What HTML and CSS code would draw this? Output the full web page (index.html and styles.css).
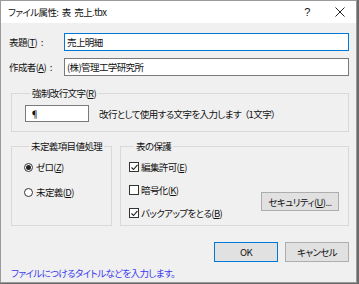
FILE: index.html
```html
<!DOCTYPE html>
<html lang="ja">
<head>
<meta charset="utf-8">
<link rel="stylesheet" href="styles.css">
</head>
<body>
<div class="dialog">
  <div class="titlebar">
    <span class="title">ファイル属性: 表 売上.tbx</span>
    <span class="help">?</span>
    <span class="close"><svg width="10" height="10" viewBox="0 0 10 10"><path d="M0.5 0.5L9.5 9.5M9.5 0.5L0.5 9.5" stroke="#222" stroke-width="1" fill="none"/></svg></span>
  </div>
  <div class="content">
    <div class="field">
      <span class="flabel">表題(<u>T</u>) :</span>
      <div class="input focused">売上明細</div>
    </div>
    <div class="field second">
      <span class="flabel">作成者(<u>A</u>) :</span>
      <div class="input">(株)管理工学研究所</div>
    </div>
    <fieldset class="group group-r">
      <legend>強制改行文字(<u>R</u>)</legend>
      <div class="rrow">
        <div class="input small">¶</div>
        <span class="hint">改行として使用する文字を入力します （1文字）</span>
      </div>
    </fieldset>
    <div class="groups">
      <fieldset class="group g1">
        <legend>未定義項目値処理</legend>
        <div class="opt"><span class="radio on"></span><span>ゼロ(<u>Z</u>)</span></div>
        <div class="opt"><span class="radio"></span><span>未定義(<u>D</u>)</span></div>
      </fieldset>
      <fieldset class="group g2">
        <legend>表の保護</legend>
        <div class="g2body">
          <div class="checks">
            <div class="opt"><span class="check on"><svg width="9" height="9" viewBox="0 0 9 9"><path d="M1.5 4.5L3.5 6.5L7.5 1.8" stroke="#222" stroke-width="1.1" fill="none"/></svg></span><span>編集許可(<u>E</u>)</span></div>
            <div class="opt"><span class="check"></span><span>暗号化(<u>K</u>)</span></div>
            <div class="opt"><span class="check on"><svg width="9" height="9" viewBox="0 0 9 9"><path d="M1.5 4.5L3.5 6.5L7.5 1.8" stroke="#222" stroke-width="1.1" fill="none"/></svg></span><span>バックアップをとる(<u>B</u>)</span></div>
          </div>
          <div class="btn sec">セキュリティ(<u>U</u>)...</div>
        </div>
      </fieldset>
    </div>
    <div class="buttons">
      <div class="btn ok">OK</div>
      <div class="btn">キャンセル</div>
    </div>
    <div class="status">ファイルにつけるタイトルなどを入力します。</div>
  </div>
</div>
</body>
</html>
```

FILE: styles.css
```css
html, body {
  margin: 0;
  padding: 0;
  background: #6a6a6a;
}
body {
  width: 359px;
  height: 284px;
  overflow: hidden;
  font-family: "Noto Sans CJK JP", "Noto Sans", sans-serif;
  font-size: 9.5px;
  font-feature-settings: "palt";
  letter-spacing: -0.6px;
  word-spacing: 2px;
  color: #111;
}
u { text-decoration-thickness: 1px; text-underline-offset: 1px; }
.dialog {
  box-sizing: border-box;
  width: 357px;
  height: 283px;
  background: #f0f0f0;
  border: 1px solid #9a9a9a;
  display: flex;
  flex-direction: column;
}
.titlebar {
  height: 22px;
  background: #fff;
  display: flex;
  align-items: center;
  padding-left: 7px;
}
.title { flex: 1; }
.help {
  width: 12px;
  text-align: center;
  font-family: "Liberation Sans", sans-serif;
  font-size: 11px;
  margin-right: 22px;
}
.close {
  width: 10px;
  height: 10px;
  margin-right: 11px;
  display: flex;
}
.content {
  padding: 10px 7px 0 8px;
  display: flex;
  flex-direction: column;
}
.field {
  display: flex;
  align-items: center;
  height: 18px;
}
.field.second { margin-top: 7px; }
.flabel { width: 55px; }
.input {
  box-sizing: border-box;
  flex: 1;
  height: 18px;
  background: #fff;
  border: 1px solid #7a7a7a;
  padding-left: 2px;
  display: flex;
  align-items: center;
}
.input.focused { border-color: #0078d7; }
.group {
  margin: 0;
  border: 1px solid #d9d9d9;
  padding: 0;
  min-width: 0;
}
.group legend {
  padding: 0 2px;
  margin-left: 5px;
  line-height: 12px;
}
.group-r {
  margin: 11px 0 0 2px;
  padding: 6px 0 9px 13px;
}
.rrow {
  display: flex;
  align-items: center;
}
.input.small {
  flex: none;
  width: 64px;
  height: 17px;
  padding-left: 4px;
}
.hint { margin-left: 10px; }
.groups {
  display: flex;
  gap: 8px;
  margin: 8px 0 0 2px;
}
.g1 { width: 101px; box-sizing: border-box; padding: 9px 0 0 12px; height: 86px; }
.g2 { flex: 1; box-sizing: border-box; padding: 9px 9px 0 8px; height: 86px; }
.opt {
  display: flex;
  align-items: center;
  height: 12px;
  margin-bottom: 13px;
}
.g2 .opt { margin-bottom: 11px; }
.g2 .opt:last-child { margin-bottom: 0; }
.radio {
  box-sizing: border-box;
  width: 9px;
  height: 9px;
  border: 1px solid #333;
  border-radius: 50%;
  background: #fff;
  margin-right: 3px;
  display: flex;
  align-items: center;
  justify-content: center;
}
.radio.on::after {
  content: "";
  width: 5px;
  height: 5px;
  border-radius: 50%;
  background: #222;
}
.check {
  box-sizing: border-box;
  width: 10px;
  height: 10px;
  border: 1px solid #333;
  background: #fff;
  margin-right: 2px;
  display: flex;
}
.check svg { margin: -0.5px; }
.g2body {
  display: flex;
  justify-content: space-between;
  align-items: flex-end;
}
.btn {
  box-sizing: border-box;
  height: 19px;
  background: #e1e1e1;
  border: 1px solid #adadad;
  display: flex;
  align-items: center;
  justify-content: center;
}
.btn.sec { width: 78px; margin-bottom: 8px; }
.buttons {
  display: flex;
  justify-content: flex-end;
  gap: 7px;
  margin-top: 16px;
}
.buttons .btn { width: 64px; height: 20px; }
.btn.ok { border-color: #0078d7; }
.status {
  margin-top: 4px;
  margin-left: 2px;
  color: #3a3af0;
}
```
